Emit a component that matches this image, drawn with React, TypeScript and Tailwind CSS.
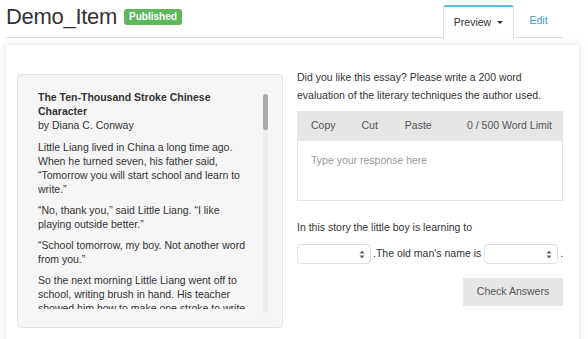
import React from 'react'

const story = [
  'Little Liang lived in China a long time ago. When he turned seven, his father said, \u201cTomorrow you will start school and learn to write.\u201d',
  '\u201cNo, thank you,\u201d said Little Liang. \u201cI like playing outside better.\u201d',
  '\u201cSchool tomorrow, my boy. Not another word from you.\u201d',
  'So the next morning Little Liang went off to school, writing brush in hand. His teacher showed him how to make one stroke to write the number one.',
]

function SelectBox() {
  return (
    <div className="flex h-[20px] w-[74px] shrink-0 items-center justify-end rounded-[4px] border border-[#e0e0e0] bg-white pr-[5px]">
      <svg width="6" height="9" viewBox="0 0 6 9">
        <path d="M3 0.5 L5.5 3.5 L0.5 3.5 Z" fill="#666" />
        <path d="M3 8.5 L5.5 5.5 L0.5 5.5 Z" fill="#666" />
      </svg>
    </div>
  )
}

export default function App() {
  return (
    <div className="h-[339px] w-[588px] overflow-hidden bg-white font-['Liberation_Sans',Arial,sans-serif] text-[#333]">
      {/* header */}
      <div className="ml-[6px] mr-[25px] flex h-[38px] items-end border-b border-[#ddd]">
        <div className="mb-[9px] flex items-center">
          <h1 className="text-[22px] leading-[22px] tracking-[-0.3px] text-[#333]">Demo_Item</h1>
          <span className="ml-[7px] rounded-[3px] bg-[#5cb85c] px-[5px] py-[2px] text-[10px] font-bold leading-[12px] text-white">
            Published
          </span>
        </div>
        <div className="ml-auto flex items-end">
          <div className="-mb-px flex h-[33px] w-[71px] items-center justify-center rounded-t-[3px] border-x border-t-2 border-[#ddd] border-t-[#5bc0de] bg-white text-[10.5px] text-[#333]">
            Preview
            <span className="ml-[6px] inline-block h-0 w-0 border-x-[3px] border-t-[3px] border-x-transparent border-t-[#333]" />
          </div>
          <div className="flex h-[33px] w-[49px] items-center justify-center text-[10.5px] text-[#3d9bd0]">Edit</div>
        </div>
      </div>

      {/* card */}
      <div className="ml-[6px] mt-[7px] h-[320px] w-[573px] bg-white shadow-[0_0_7px_rgba(0,0,0,0.13)]">
        <div className="flex gap-[14px] pl-[11px] pt-[29px]">
          {/* story box */}
          <div className="flex h-[254px] w-[266px] shrink-0 rounded-[4px] border border-[#e3e3e3] bg-[#f5f5f5] pb-[14px] pl-[20px] pr-[14px] pt-[19px]">
            <div className="-mt-[4px] h-[219px] flex-1 overflow-hidden pr-[10px] text-[10.5px] leading-[14px] text-[#333]">
              <div className="font-bold">The Ten-Thousand Stroke Chinese Character</div>
              <div className="mb-[8px]">by Diana C. Conway</div>
              {story.map((p, i) => (
                <p key={i} className="mb-[7px]">
                  {p}
                </p>
              ))}
            </div>
            <div className="h-full w-[5px] rounded-[3px] bg-[#ebebeb]">
              <div className="h-[36px] w-[5px] rounded-[3px] bg-[#a9a9a9]" />
            </div>
          </div>

          {/* question column */}
          <div className="-mt-[6px] w-[266px] shrink-0 text-[10.5px] text-[#333]">
            <p className="leading-[18px]">
              Did you like this essay? Please write a 200 word evaluation of the literary techniques the author used.
            </p>
            <div className="mt-[7px] flex h-[30px] items-center bg-[#e6e6e6] pl-[14px] pr-[11px] text-[#555]">
              <span>Copy</span>
              <span className="ml-[26px]">Cut</span>
              <span className="ml-[27px]">Paste</span>
              <span className="ml-auto">0 / 500 Word Limit</span>
            </div>
            <div className="h-[60px] border-x border-b border-[#e3e3e3] bg-white pl-[13px] pt-[12px] text-[#999]">
              Type your response here
            </div>
            <p className="mt-[19px] leading-[14px]">In this story the little boy is learning to</p>
            <div className="mt-[10px] flex items-center whitespace-nowrap">
              <SelectBox />
              <span className="ml-[2px] mr-[3px]">.The old man&apos;s name is</span>
              <SelectBox />
              <span className="ml-[2px]">.</span>
            </div>
            <div className="mt-[14px] flex justify-end">
              <button className="h-[28px] w-[100px] bg-[#e6e6e6] text-[10.5px] text-[#555]">Check Answers</button>
            </div>
          </div>
        </div>
      </div>
    </div>
  )
}
